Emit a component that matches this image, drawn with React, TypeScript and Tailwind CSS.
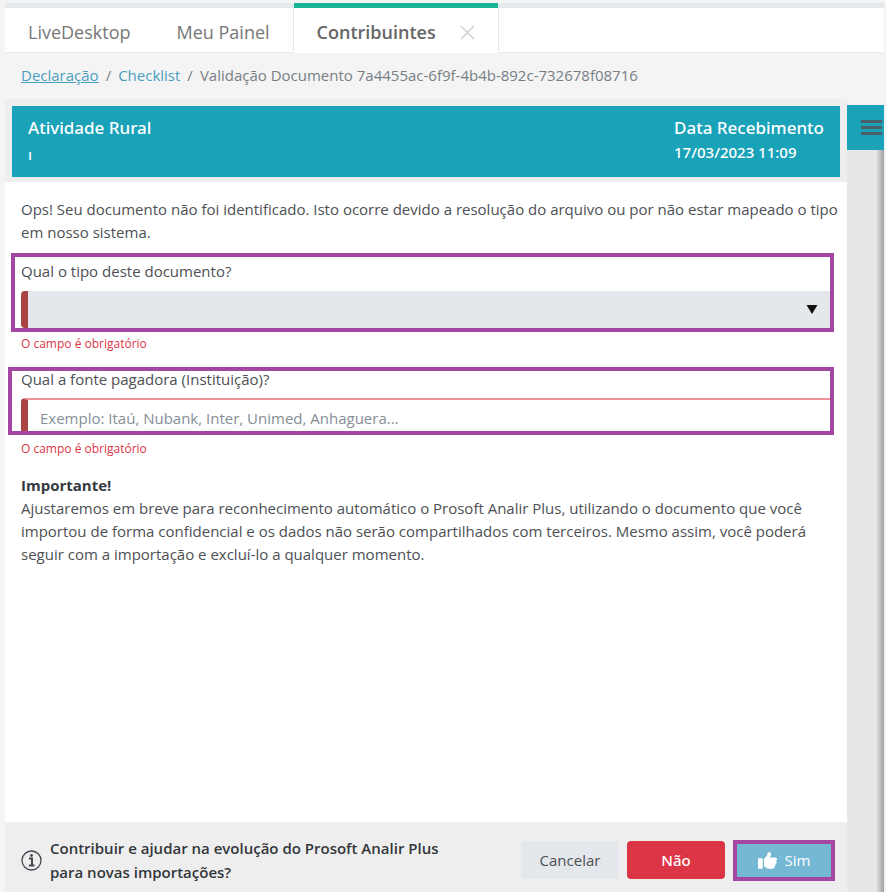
import React, { useState } from 'react';
import { FaThumbsUp } from 'react-icons/fa6';

const tabs = ['LiveDesktop', 'Meu Painel'];

const Tabs: React.FC = () => (
  <nav className="flex h-[50px] text-[18px] text-[#777]">
    <div className="flex border-t-[5px] border-r border-b border-t-[#e5e9ec] border-r-[#e7eaec] border-b-[#e7eaec] bg-white">
      {tabs.map(tab => (
        <button key={tab} type="button" className="px-[23px] pt-1">
          {tab}
        </button>
      ))}
    </div>
    <div className="flex items-center gap-6 border-t-[5px] border-[#1ab394] bg-white px-[23px] pt-1">
      <button type="button" className="font-semibold text-[#666]">Contribuintes</button>
      <button type="button" aria-label="Fechar">
        <svg width="15" height="15" viewBox="0 0 15 15" stroke="#ccc" strokeWidth="1.3">
          <path d="M1 1l13 13M14 1L1 14" />
        </svg>
      </button>
    </div>
    <div className="flex-1 border-t-[5px] border-b border-l border-t-[#e5e9ec] border-b-[#e7eaec] border-l-[#e7eaec] bg-white" />
  </nav>
);

const Breadcrumb: React.FC = () => (
  <nav className="flex h-[46px] items-center gap-[7px] px-4 pb-[2px] text-[#777f86]">
    <a href="#declaracao" className="text-[#4a9fc0] underline">Declaração</a>
    <span>/</span>
    <a href="#checklist" className="text-[#4a9fc0]">Checklist</a>
    <span>/</span>
    <span>Validação Documento 7a4455ac-6f9f-4b4b-892c-732678f08716</span>
  </nav>
);

const App: React.FC = () => {
  const [tipo, setTipo] = useState('');
  const [fonte, setFonte] = useState('');

  return (
    <div className="flex min-h-screen flex-col bg-[#f4f4f4] pt-[3px] pr-[2px] pl-[5px] font-['Open_Sans',sans-serif] text-[15px] text-[#4d5054]">
      <Tabs />
      <Breadcrumb />

      <div className="flex flex-1">
        <main className="flex flex-1 flex-col bg-white">
          {/* Document header */}
          <div className="bg-[#eee] px-[7px] pt-[7px] pb-[5px]">
            <header className="flex h-[71px] justify-between bg-[#19a2b8] px-4 pt-[10px] font-['Noto_Sans',sans-serif] font-medium text-white">
              <div>
                <h1 className="text-[17px] leading-6">Atividade Rural</h1>
                <p className="leading-7">ı</p>
              </div>
              <div>
                <h2 className="text-[17px] leading-6">Data Recebimento</h2>
                <p className="leading-6">17/03/2023 11:09</p>
              </div>
            </header>
          </div>

          <form id="validacao" className="flex-1 pr-[13px] pl-4 leading-6">
            <p className="-mr-2 pt-4 leading-[23px]">
              Ops! Seu documento não foi identificado. Isto ocorre devido a resolução do arquivo ou por não estar mapeado o tipo em nosso sistema.
            </p>

            <div className="mt-[9px] -ml-[10px] border-4 border-[#a347a3] pl-[6px]">
              <label htmlFor="tipo" className="block pt-[2px] pb-2">Qual o tipo deste documento?</label>
              <div className="relative">
                <select
                  id="tipo"
                  value={tipo}
                  onChange={e => setTipo(e.target.value)}
                  className="block h-[37px] w-full appearance-none rounded-l border-l-[7px] border-[#a94442] bg-[#e4e7eb] px-3"
                >
                  <option value=""></option>
                </select>
                <svg className="pointer-events-none absolute top-[14px] right-3" width="12" height="9" viewBox="0 0 12 9" fill="#111">
                  <path d="M0.5 0h11L6 9z" />
                </svg>
              </div>
            </div>
            <p className="text-xs leading-6 text-[#dc3545]">O campo é obrigatório</p>

            <div className="mt-[11px] -ml-[13px] border-4 border-[#a347a3] pl-[9px]">
              <label htmlFor="fonte" className="block h-[27px] leading-4">Qual a fonte pagadora (Instituição)?</label>
              <input
                id="fonte"
                type="text"
                value={fonte}
                onChange={e => setFonte(e.target.value)}
                placeholder="Exemplo: Itaú, Nubank, Inter, Unimed, Anhaguera..."
                className="block h-[33px] w-full rounded-tl border-t-2 border-l-[7px] border-t-[#ee9299] border-l-[#a94442] px-3 pt-1 placeholder:text-[#868e96]"
              />
            </div>
            <p className="pt-[2px] text-xs leading-6 text-[#dc3545]">O campo é obrigatório</p>

            <p className="mt-3 leading-[23px]">
              <strong className="block leading-6 text-[#343a40]">Importante!</strong>
              Ajustaremos em breve para reconhecimento automático o Prosoft Analir Plus, utilizando o documento que você importou de forma confidencial e os dados não serão compartilhados com terceiros. Mesmo assim, você poderá seguir com a importação e excluí-lo a qualquer momento.
            </p>
          </form>

          {/* Actions */}
          <footer className="flex h-[70px] items-center justify-between bg-[#eee] pt-[6px] pr-3 pl-4">
            <div className="flex items-center gap-2">
              <svg width="21" height="21" viewBox="0 0 21 21" fill="none" stroke="#4a4550">
                <circle cx="10.5" cy="10.5" r="9.5" strokeWidth="1.3" />
                <path d="M8 8.5h3v6.5M8 15.5h5.5" strokeWidth="2" />
                <circle cx="10.5" cy="5.5" r="1.4" fill="#4a4550" stroke="none" />
              </svg>
              <p className="w-[410px] leading-6 font-semibold text-[#33373c]">
                Contribuir e ajudar na evolução do Prosoft Analir Plus para novas importações?
              </p>
            </div>
            <div className="flex items-center gap-2">
              <button type="button" className="h-[38px] w-[98px] rounded bg-[#e4e7eb]">Cancelar</button>
              <button type="button" className="h-[38px] w-[98px] rounded bg-[#dc3545] font-['Noto_Sans',sans-serif] font-medium text-white">Não</button>
              <button type="submit" form="validacao" className="flex h-[41px] w-[102px] items-center justify-center gap-2 border-4 border-[#a347a3] bg-[#74b8d3] text-white">
                <FaThumbsUp size={19} />
                Sim
              </button>
            </div>
          </footer>
        </main>

        {/* Side rail */}
        <aside className="flex w-[37px] flex-col pt-[6px]">
          <button type="button" aria-label="Menu" className="flex h-[45px] items-center justify-end bg-[#19a2b8] pr-[2px]">
            <svg width="21" height="16" viewBox="0 0 21 16" fill="#4b6067">
              <path d="M0 0h21v3H0zM0 6h21v3H0zM0 12h21v3H0z" />
            </svg>
          </button>
          <div className="flex flex-1 justify-end bg-[#e7e7e9]">
            <div className="w-2 bg-linear-to-r from-[#e7e7e9] to-[#a0a0a0]" />
          </div>
        </aside>
      </div>
    </div>
  );
};

export default App;
